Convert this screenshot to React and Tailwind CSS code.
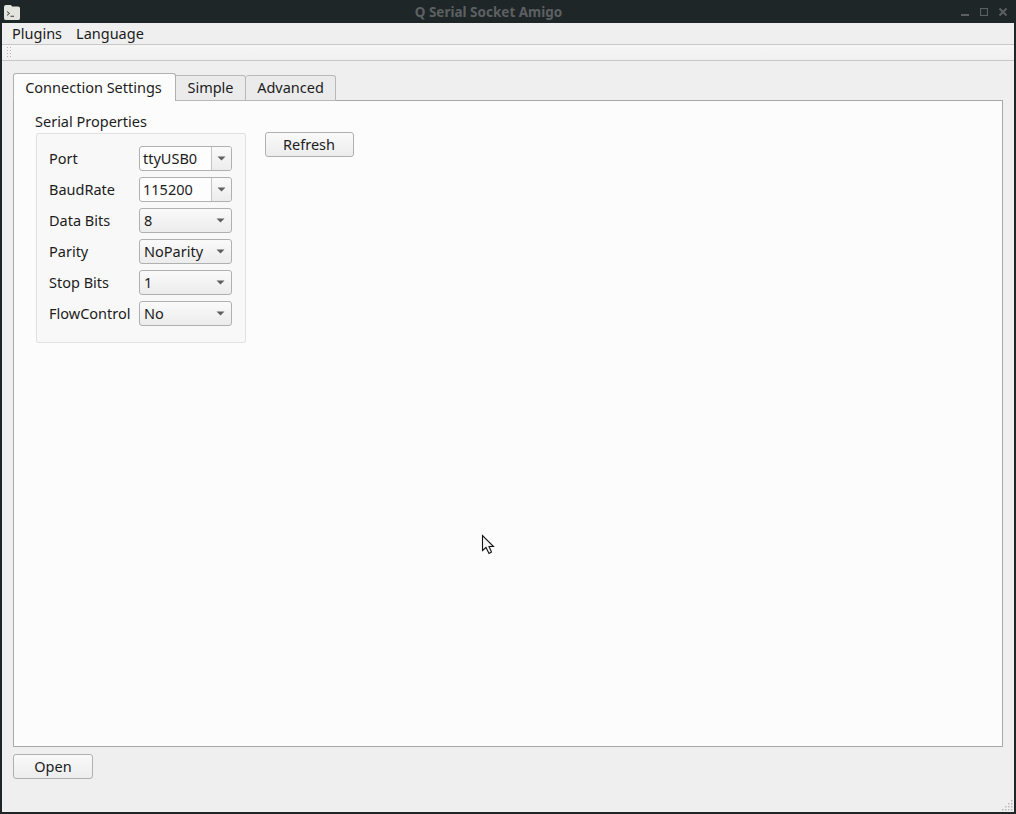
import React from 'react';

const FIELDS = [
  { label: 'Port', value: 'ttyUSB0', editable: true },
  { label: 'BaudRate', value: '115200', editable: true },
  { label: 'Data Bits', value: '8' },
  { label: 'Parity', value: 'NoParity' },
  { label: 'Stop Bits', value: '1' },
  { label: 'FlowControl', value: 'No' },
];

function Arrow() {
  return (
    <svg width="9" height="5" viewBox="0 0 9 5" className="block">
      <path d="M0.5 0.5h8L4.5 4.5z" fill="#5f5f5f" />
    </svg>
  );
}

function Combo({ value, editable }) {
  if (editable) {
    return (
      <div className="flex h-[25px] w-[93px] rounded-[3px] border border-[#b0b0b0] bg-[#fdfdfd]">
        <div className="flex-1 pl-[3px] leading-[23px]">{value}</div>
        <div className="flex w-[20px] items-center justify-center rounded-r-[3px] border-l border-[#c4c4c4] bg-gradient-to-b from-[#fafafa] to-[#ececec]">
          <Arrow />
        </div>
      </div>
    );
  }
  return (
    <div className="flex h-[25px] w-[93px] items-center justify-between rounded-[3px] border border-[#b0b0b0] bg-gradient-to-b from-[#fafafa] to-[#ececec] pl-[4px] pr-[6px]">
      <span>{value}</span>
      <Arrow />
    </div>
  );
}

function Button({ children, className }) {
  return (
    <div className={`flex h-[25px] items-center justify-center rounded-[3px] border border-[#b0b0b0] bg-gradient-to-b from-[#fafafa] to-[#ececec] ${className}`}>
      {children}
    </div>
  );
}

function Grip({ cols, rows }) {
  return (
    <svg width={cols * 3} height={rows * 3} className="block">
      {Array.from({ length: rows }).flatMap((_, r) =>
        Array.from({ length: cols }).map((_, c) => (
          <rect key={`${r}-${c}`} x={c * 3} y={r * 3} width="1" height="1" fill="#b4b4b4" />
        ))
      )}
    </svg>
  );
}

export default function App() {
  return (
    <div
      className="relative flex h-[814px] w-[1016px] flex-col overflow-hidden bg-[#1f2628] text-[14.5px] text-[#1c1c1c]"
      style={{ fontFamily: '"Noto Sans", "DejaVu Sans", sans-serif' }}
    >
      {/* title bar */}
      <div className="flex h-[23px] shrink-0 items-center">
        <svg width="16" height="15" viewBox="0 0 16 16" preserveAspectRatio="none" className="ml-[4px] mt-[1px] block shrink-0">
          <path d="M2 0h5l1 1.5h6a2 2 0 0 1 2 2V14a2 2 0 0 1-2 2H2a2 2 0 0 1-2-2V2a2 2 0 0 1 2-2z" fill="#e4e4de" />
          <path d="M3 7l2.5 2L3 11" fill="none" stroke="#333" strokeWidth="1" />
          <path d="M6.5 12h3.5" stroke="#333" strokeWidth="1" />
        </svg>
        <div className="flex-1 pr-[4px] pt-[1px] text-center text-[13.5px] font-bold leading-[22px] text-[#5c6062]">
          Q Serial Socket Amigo
        </div>
        <div className="mr-[9px] flex items-center gap-[11px]">
          <svg width="8" height="8" viewBox="0 0 8 8" className="block">
            <rect x="0" y="6" width="8" height="2" fill="#5c6062" />
          </svg>
          <svg width="8" height="8" viewBox="0 0 8 8" className="block">
            <rect x="0.5" y="0.5" width="7" height="7" fill="none" stroke="#5c6062" strokeWidth="1.2" />
          </svg>
          <svg width="8" height="8" viewBox="0 0 8 8" className="block">
            <path d="M0.5 0.5l7 7M7.5 0.5l-7 7" stroke="#5c6062" strokeWidth="2" />
          </svg>
        </div>
      </div>

      {/* window body */}
      <div className="mx-[2px] mb-[2px] flex flex-1 flex-col bg-[#efefef]">
        <div className="flex h-[21px] shrink-0 items-center gap-[14px] pl-[10px] leading-[21px]">
          <span>Plugins</span>
          <span>Language</span>
        </div>
        <div className="flex h-[17px] shrink-0 items-center border-y border-[#c8c8c8] bg-gradient-to-b from-[#f6f6f6] to-[#f0f0f0] pl-[5px]">
          <Grip cols={2} rows={4} />
        </div>

        <div className="flex flex-1 flex-col px-[11px] pt-[12px]">
          {/* tabs */}
          <div className="relative z-10 mb-[-1px] flex h-[28px] shrink-0 items-end">
            <div className="flex h-[28px] w-[163px] items-center justify-center rounded-t-[3px] border border-b-0 border-[#b0b0b0] bg-[#fcfcfc] pr-[2px]">
              Connection Settings
            </div>
            <div className="flex h-[26px] w-[70px] items-center justify-center rounded-tr-[3px] border-y border-r border-[#b8b8b8] bg-[#ebebeb]">
              Simple
            </div>
            <div className="flex h-[26px] w-[90px] items-center justify-center rounded-t-[3px] border-y border-r border-[#b8b8b8] bg-[#ebebeb]">
              Advanced
            </div>
          </div>

          {/* tab panel */}
          <div className="flex h-[647px] shrink-0 gap-[19px] border border-[#a8a8a8] bg-[#fcfcfc] pl-[21px] pt-[11px]">
            <div>
              <div className="h-[21px] leading-[18px]">Serial Properties</div>
              <div className="ml-[1px] flex h-[210px] w-[210px] flex-col gap-[6px] rounded-[2px] border border-[#e2e2e2] bg-[#f8f8f8] pl-[12px] pt-[12px]">
                {FIELDS.map((f) => (
                  <div key={f.label} className="flex h-[25px] items-center">
                    <div className="w-[90px]">{f.label}</div>
                    <Combo value={f.value} editable={f.editable} />
                  </div>
                ))}
              </div>
            </div>
            <div className="pt-[20px]">
              <Button className="w-[89px] pr-[1px]">Refresh</Button>
            </div>
          </div>

          {/* footer */}
          <div className="relative flex-1 pt-[7px]">
            <Button className="w-[80px]">Open</Button>
          </div>
        </div>
      </div>

      {/* resize grip */}
      <div className="absolute bottom-[3px] right-[3px]">
        <svg width="11" height="11" className="block">
          {[[9, 0], [6, 3], [9, 3], [3, 6], [6, 6], [9, 6], [0, 9], [3, 9], [6, 9], [9, 9]].map(([x, y]) => (
            <rect key={`${x}-${y}`} x={x} y={y} width="1.5" height="1.5" fill="#bcbcbc" />
          ))}
        </svg>
      </div>

      {/* mouse pointer */}
      <svg width="14" height="21" viewBox="0 0 14 21" className="absolute left-[481px] top-[534px] block">
        <path d="M1.5 1.5V16.5L5 13.5L8 19.5L10.5 18L8 12.5H12.5z" fill="#f4f4f4" stroke="#111" strokeWidth="1.1" />
      </svg>
    </div>
  );
}
